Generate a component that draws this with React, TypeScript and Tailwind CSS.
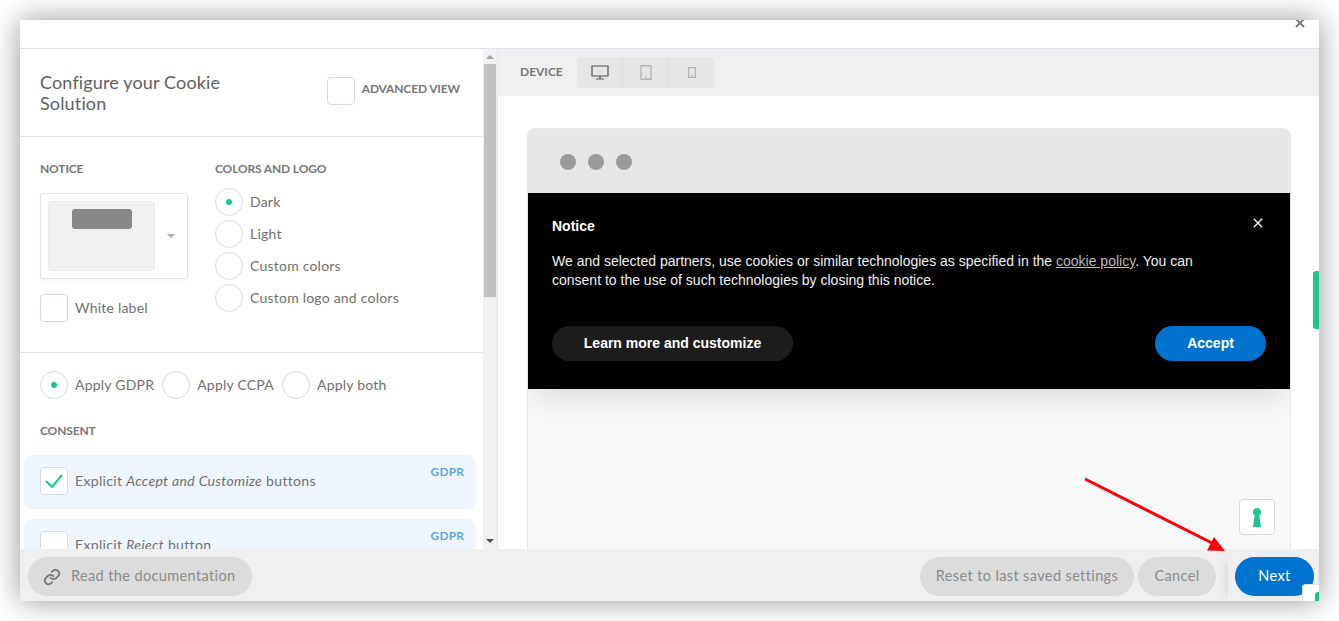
import React from "react";

const ui = "font-['Lato','Noto_Sans',sans-serif]";
const cap = "text-[12px] font-bold leading-[16px] tracking-[-0.15px] text-[#777]";
const lab = "pb-[2px] text-[14px] tracking-[0.22px] text-[#707070]";
const rowLab = "pb-[2px] text-[14px] tracking-[0.34px] text-[#707070]";

function Check({ checked = false }: { checked?: boolean }) {
  return (
    <span className="flex h-[28px] w-[28px] shrink-0 items-center justify-center rounded-[4px] border border-[#d8dbe3] bg-white">
      {checked && (
        <svg width="20" height="16" viewBox="0 0 20 16" fill="none">
          <path d="M2 8l6 6L18 2" stroke="#1cc691" strokeWidth="2" />
        </svg>
      )}
    </span>
  );
}

function Radio({ label, on = false }: { label: string; on?: boolean }) {
  return (
    <div className="flex items-center gap-[7px]">
      <span className="flex h-[28px] w-[28px] shrink-0 items-center justify-center rounded-full border border-[#d8dbe3] bg-white">
        {on && <span className="h-[6px] w-[6px] rounded-full bg-[#1cc691]" />}
      </span>
      <span className={lab}>{label}</span>
    </div>
  );
}

function Row({ children }: { children: React.ReactNode }) {
  return (
    <div className="relative flex h-[54px] shrink-0 items-center gap-[7px] rounded-[8px] bg-[#eef5fc] px-[16px] pb-[2px]">
      {children}
      <span className="absolute right-[12px] top-[8px] text-[12px] font-bold tracking-[0.1px] text-[#62a9e2]">GDPR</span>
    </div>
  );
}

function Pill({ children, className = "" }: { children: React.ReactNode; className?: string }) {
  return (
    <button className={`flex h-[39px] items-center rounded-full bg-[#dcdcdc] pb-[2px] text-[14.5px] tracking-[0.38px] text-[#8a8a8a] ${className}`}>
      {children}
    </button>
  );
}

export default function App() {
  return (
    <div className={`h-[621px] w-[1339px] overflow-hidden bg-white p-[20px] ${ui}`}>
      <div className="relative flex h-[581px] w-[1299px] flex-col overflow-hidden bg-white shadow-[0_0_28px_rgba(0,0,0,0.42)]">
        {/* top bar */}
        <div className="relative h-[29px] shrink-0 border-b border-[#e0e2ea] bg-white">
          <svg className="absolute right-[14px] top-[-2px]" width="10" height="10" viewBox="0 0 10 10">
            <path d="M1 1l8 8M9 1l-8 8" stroke="#7c7c7c" strokeWidth="2" />
          </svg>
        </div>

        {/* main */}
        <div className="flex min-h-0 flex-1">
          {/* left column */}
          <div className="flex w-[478px] shrink-0 border-r border-[#e4e4e6]">
            <div className="w-[463px] shrink-0 overflow-hidden">
              <div className="flex h-[88px] items-start justify-between border-b border-[#e4e4e6] pl-[20px] pr-[23px] pt-[23px]">
                <h1 className="w-[210px] text-[18px] leading-[21px] tracking-[0.15px] text-[#5f5f5f]">Configure your Cookie Solution</h1>
                <div className="mt-[5px] flex items-start gap-[7px]">
                  <Check />
                  <span className={`mt-[4px] ${cap}`}>ADVANCED VIEW</span>
                </div>
              </div>

              <div className="flex h-[216px] gap-[27px] border-b border-[#e4e4e6] pl-[20px] pt-[24px]">
                <div className="w-[148px]">
                  <div className={cap}>NOTICE</div>
                  <div className="mt-[16px] flex h-[86px] items-center rounded-[3px] border border-[#e2e3e8] pl-[7px] shadow-[0_2px_3px_rgba(0,0,0,0.04)]">
                    <div className="flex h-[70px] w-[107px] justify-center rounded-[3px] border border-[#eaeaea] bg-[#f1f1f1] pt-[7px]">
                      <div className="h-[20px] w-[60px] rounded-[3px] bg-[#888]" />
                    </div>
                    <span className="ml-[12px] h-0 w-0 border-x-[4px] border-t-[4px] border-x-transparent border-t-[#aaa]" />
                  </div>
                  <div className="mt-[15px] flex items-center gap-[7px]">
                    <Check />
                    <span className={lab}>White label</span>
                  </div>
                </div>
                <div>
                  <div className={cap}>COLORS AND LOGO</div>
                  <div className="mt-[11px] flex flex-col gap-[4px]">
                    <Radio label="Dark" on />
                    <Radio label="Light" />
                    <Radio label="Custom colors" />
                    <Radio label="Custom logo and colors" />
                  </div>
                </div>
              </div>

              <div className="flex gap-[8px] pl-[20px] pt-[18px]">
                <Radio label="Apply GDPR" on />
                <Radio label="Apply CCPA" />
                <Radio label="Apply both" />
              </div>
              <div className={`ml-[20px] mt-[24px] ${cap}`}>CONSENT</div>
              <div className="ml-[4px] mr-[7px] mt-[16px] flex flex-col gap-[10px]">
                <Row>
                  <Check checked />
                  <span className={rowLab}>Explicit <i>Accept and Customize</i> buttons</span>
                </Row>
                <Row>
                  <Check />
                  <span className={rowLab}>Explicit <i>Reject</i> button</span>
                </Row>
              </div>
            </div>
            {/* scrollbar */}
            <div className="flex w-[14px] flex-col items-center bg-[#f1f1f1]">
              <span className="mt-[6px] h-0 w-0 border-x-[4px] border-b-[4px] border-x-transparent border-b-[#a3a3a3]" />
              <div className="mt-[5px] h-[233px] w-[12px] bg-[#c1c1c1]" />
              <span className="mb-[6px] mt-auto h-0 w-0 border-x-[4px] border-t-[4px] border-x-transparent border-t-[#505050]" />
            </div>
          </div>

          {/* right column */}
          <div className="relative flex min-w-0 flex-1 flex-col overflow-hidden">
            <div className="flex h-[47px] shrink-0 items-center gap-[14px] bg-[#f0eff0] pl-[22px]">
              <span className="pb-[2px] text-[12px] font-bold tracking-[0px] text-[#777]">DEVICE</span>
              <div className="mt-[-1px] flex h-[31px] w-[137px] rounded-[4px] bg-[#e6e6e6]">
                <div className="flex w-[46px] items-center justify-center border-r border-[#dcdcdc] pl-[2px]">
                  <svg width="18" height="15" viewBox="0 0 18 15" fill="none">
                    <path d="M1 1h16v10H1zM9 11v3M5 14h8" stroke="#555" strokeWidth="1.2" />
                  </svg>
                </div>
                <div className="flex w-[46px] items-center justify-center border-r border-[#dcdcdc] pl-[2px]">
                  <svg width="12" height="15" viewBox="0 0 12 15" fill="none">
                    <path d="M1 .7h10v13.6H1z" stroke="#b4b4b4" strokeWidth="1.400" />
                    <path d="M5 12h2" stroke="#b4b4b4" strokeWidth="1.200" />
                  </svg>
                </div>
                <div className="flex w-[45px] items-center justify-center pl-[2px]">
                  <svg width="8" height="11" viewBox="0 0 8 11" fill="none">
                    <path d="M.6.6h6.800v9.800H.6z" stroke="#b4b4b4" strokeWidth="1.200" />
                    <path d="M3 8.600h2" stroke="#b4b4b4" strokeWidth="1" />
                  </svg>
                </div>
              </div>
            </div>

            <div className="min-h-0 flex-1 bg-white pl-[29px] pr-[28px] pt-[32px]">
              <div className="relative h-[460px] overflow-hidden rounded-t-[8px] border border-b-0 border-[#e8e8e8] bg-[#f8f8f8]">
                <div className="flex h-[64px] items-center gap-[12px] bg-[#e7e7e7] pl-[32px] pt-[2px]">
                  <span className="h-[16px] w-[16px] rounded-full bg-[#9b9b9b]" />
                  <span className="h-[16px] w-[16px] rounded-full bg-[#9b9b9b]" />
                  <span className="h-[16px] w-[16px] rounded-full bg-[#9b9b9b]" />
                </div>
                <div className="relative h-[196px] bg-black px-[24px] pt-[24px] font-['Liberation_Sans',Arial,sans-serif] text-white shadow-[0_16px_24px_-6px_rgba(0,0,0,0.1)]">
                  <svg className="absolute right-[27px] top-[25px]" width="10" height="10" viewBox="0 0 10 10">
                    <path d="M.8.8l8.400 8.400M9.200.8L.8 9.200" stroke="#fff" strokeWidth="1.300" />
                  </svg>
                  <div className="text-[14px] font-bold leading-[18px]">Notice</div>
                  <p className="mt-[17px] w-[670px] text-[14px] leading-[19px] text-[#f0f0f0]">
                    We and selected partners, use cookies or similar technologies as specified in the{" "}
                    <span className="text-[#b9b9b9] underline">cookie policy</span>. You can consent to the use of such technologies by closing this notice.
                  </p>
                  <div className="mt-[36px] flex items-center justify-between">
                    <button className="h-[35px] w-[241px] rounded-full bg-[#1c1c1c] text-[14px] font-bold text-white">Learn more and customize</button>
                    <button className="h-[35px] w-[111px] rounded-full bg-[#0073ce] text-[14px] font-bold text-white">Accept</button>
                  </div>
                </div>
                <div className="absolute right-[15px] top-[370px] flex h-[36px] w-[36px] items-center justify-center rounded-[4px] border border-[#d8d8d8] bg-white">
                  <svg width="10" height="19" viewBox="0 0 10 19"><path d="M5 0a4 4 0 0 1 2.300 7.300L9 19H1L2.700 7.300A4 4 0 0 1 5 0z" fill="#1cc691" /></svg>
                </div>
              </div>
            </div>
            <div className="absolute right-0 top-[222px] h-[58px] w-[6px] rounded-l-[3px] bg-[#1cc691]" />
          </div>
        </div>

        {/* footer */}
        <div className="relative flex h-[52px] shrink-0 items-start bg-[#efefef] pl-[8px] pt-[8px]">
          <Pill className="w-[224px] pl-[15px]">
            <svg className="mt-[2px]" width="18" height="18" viewBox="0 0 24 24" fill="none" stroke="#777" strokeWidth="2.400" strokeLinecap="round" strokeLinejoin="round">
              <path d="M10 13a5 5 0 0 0 7.500.5l3-3a5 5 0 0 0-7-7l-1.700 1.700" />
              <path d="M14 11a5 5 0 0 0-7.500-.5l-3 3a5 5 0 0 0 7 7l1.700-1.700" />
            </svg>
            <span className="ml-[10px]">Read the documentation</span>
          </Pill>
          <div className="ml-auto flex gap-[4px] pr-[12px]">
            <Pill className="w-[214px] justify-center">Reset to last saved settings</Pill>
            <Pill className="w-[78px] justify-center">Cancel</Pill>
          </div>
          <div className="relative flex h-[44px] w-[91px] shrink-0 self-stretch bg-[#efefef] pl-[7px] shadow-[-8px_0_10px_-6px_rgba(0,0,0,0.1)]">
            <Pill className="w-[79px] justify-center !bg-[#0073ce] !text-white">Next</Pill>
            <div className="absolute left-[74px] top-[27px] h-[24px] w-[24px] overflow-hidden rounded-[3px] border border-[#e2e2e2] bg-white">
              <span className="absolute left-[12px] top-[7px] h-[10px] w-[6px] rounded-t-full bg-[#1cc691]" />
            </div>
          </div>
        </div>

        {/* annotation arrow */}
        <svg className="absolute left-[1060px] top-[455px]" width="175" height="85" viewBox="0 0 175 85" fill="none">
          <path d="M5 4L134 69" stroke="#fb0007" strokeWidth="3" />
          <path d="M145 76L127 75.500L134 62Z" fill="#fb0007" />
        </svg>
      </div>
    </div>
  );
}
